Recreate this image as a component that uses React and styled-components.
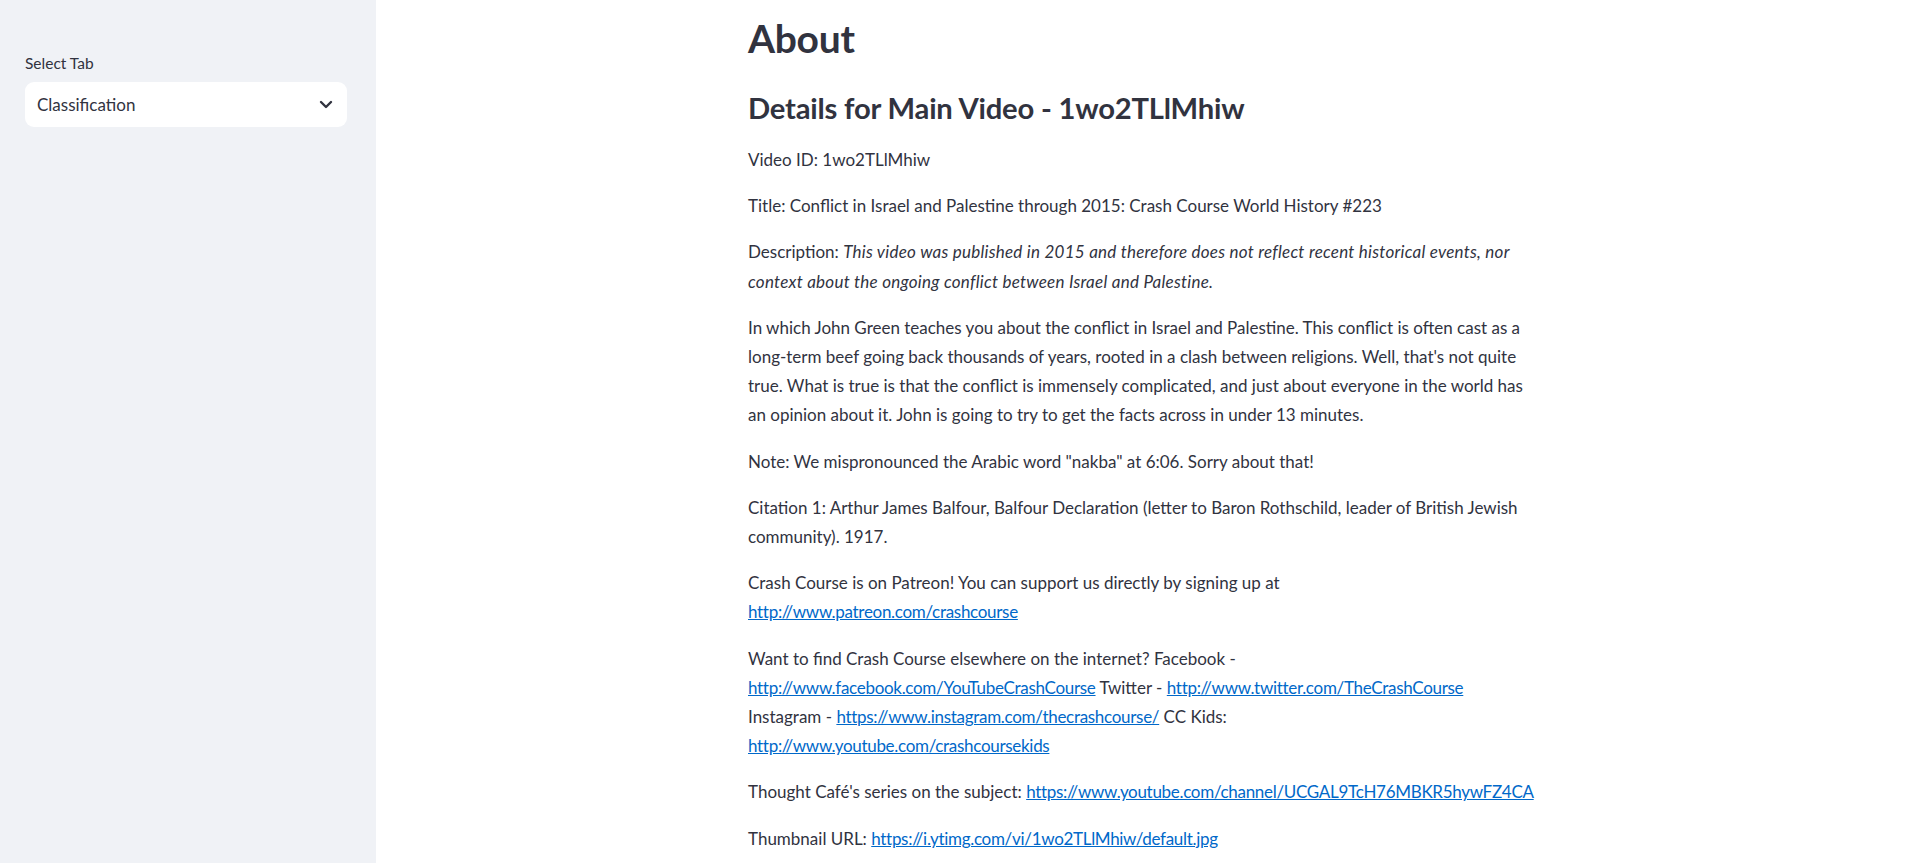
import React from 'react';
import styled, { createGlobalStyle } from 'styled-components';

const GlobalStyle = createGlobalStyle`
  html, body {
    margin: 0;
    padding: 0;
    background: #ffffff;
    color: #31333f;
    font-family: Lato, "Liberation Sans", sans-serif;
  }
  * {
    box-sizing: border-box;
  }
`;

const AppShell = styled.div`
  display: flex;
  width: 100%;
  height: 100vh;
  overflow: hidden;
`;

const Sidebar = styled.aside`
  flex: 0 0 376px;
  height: 100%;
  background: #f0f2f6;
  padding: 53px 29px 0 25px;
`;

const FieldLabel = styled.label`
  display: block;
  font-size: 15.5px;
  line-height: 20px;
  color: #31333f;
  margin-bottom: 9px;
`;

const SelectBox = styled.div`
  display: flex;
  align-items: center;
  justify-content: space-between;
  height: 45px;
  padding: 0 14px 0 12px;
  background: #ffffff;
  border-radius: 9px;
  font-size: 17px;
  color: #31333f;
  cursor: pointer;
`;

const Main = styled.main`
  flex: 1;
  display: flex;
  justify-content: center;
  overflow: hidden;
`;

const Content = styled.div`
  width: 798px;
  padding: 10px 8px 0 0;
`;

const Title = styled.h2`
  margin: 0;
  font-size: 39px;
  line-height: 56px;
  font-weight: 700;
  letter-spacing: -0.3px;
`;

const SubTitle = styled.h3`
  margin: 22px 0 17px;
  font-size: 29.2px;
  line-height: 40px;
  font-weight: 700;
  letter-spacing: -0.2px;
`;

const Para = styled.p`
  margin: 0 0 17px;
  font-size: 17px;
  line-height: 29.2px;
`;

const Emph = styled.em`
  font-style: italic;
  letter-spacing: 0.25px;
`;

const Link = styled.a`
  color: #0068c9;
  text-decoration: underline;
  letter-spacing: -0.3px;
`;

const Chevron = () => (
  <svg width="14" height="9" viewBox="0 0 14 9" fill="none">
    <path d="M2 2 L7 7 L12 2" stroke="#31333f" strokeWidth="2.4" strokeLinecap="round" strokeLinejoin="round" />
  </svg>
);

const App = () => {
  return (
    <>
      <GlobalStyle />
      <AppShell>
        <Sidebar>
          <FieldLabel>Select Tab</FieldLabel>
          <SelectBox>
            <span>Classification</span>
            <Chevron />
          </SelectBox>
        </Sidebar>
        <Main>
          <Content>
            <Title>About</Title>
            <SubTitle>Details for Main Video - 1wo2TLlMhiw</SubTitle>
            <Para>Video ID: 1wo2TLlMhiw</Para>
            <Para>Title: Conflict in Israel and Palestine through 2015: Crash Course World History #223</Para>
            <Para>
              Description:{' '}
              <Emph>
                This video was published in 2015 and therefore does not reflect recent historical events, nor
                context about the ongoing conflict between Israel and Palestine.
              </Emph>
            </Para>
            <Para>
              In which John Green teaches you about the conflict in Israel and Palestine. This conflict is often cast
              as a long-term beef going back thousands of years, rooted in a clash between religions. Well, that's not
              quite true. What is true is that the conflict is immensely complicated, and just about everyone in the
              world has an opinion about it. John is going to try to get the facts across in under 13 minutes.
            </Para>
            <Para>Note: We mispronounced the Arabic word "nakba" at 6:06. Sorry about that!</Para>
            <Para>
              Citation 1: Arthur James Balfour, Balfour Declaration (letter to Baron Rothschild, leader of British
              Jewish community). 1917.
            </Para>
            <Para>
              Crash Course is on Patreon! You can support us directly by signing up at{' '}
              <Link href="#">http://www.patreon.com/crashcourse</Link>
            </Para>
            <Para>
              Want to find Crash Course elsewhere on the internet? Facebook -{' '}
              <Link href="#">http://www.facebook.com/YouTubeCrashCourse</Link> Twitter -{' '}
              <Link href="#">http://www.twitter.com/TheCrashCourse</Link> Instagram -{' '}
              <Link href="#">https://www.instagram.com/thecrashcourse/</Link> CC Kids:
              <br />
              <Link href="#">http://www.youtube.com/crashcoursekids</Link>
            </Para>
            <Para>
              Thought Café's series on the subject:{' '}
              <Link href="#">https://www.youtube.com/channel/UCGAL9TcH76MBKR5hywFZ4CA</Link>
            </Para>
            <Para>
              Thumbnail URL: <Link href="#">https://i.ytimg.com/vi/1wo2TLlMhiw/default.jpg</Link>
            </Para>
          </Content>
        </Main>
      </AppShell>
    </>
  );
};

export default App;
